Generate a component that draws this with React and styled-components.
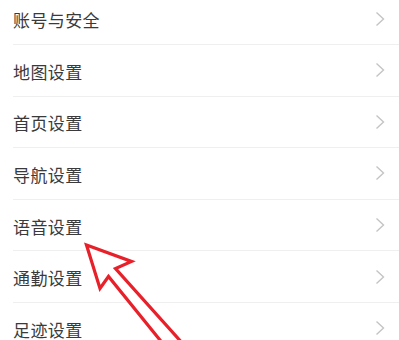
import React from "react";
import styled, { createGlobalStyle } from "styled-components";

const items = [
  "账号与安全",
  "地图设置",
  "首页设置",
  "导航设置",
  "语音设置",
  "通勤设置",
  "足迹设置",
];

export default function App() {
  return (
    <>
      <GlobalStyle />
      <Page>
        <List>
          {items.map((label) => (
            <Row key={label}>
              <Label>{label}</Label>
              <Chevron viewBox="0 0 10 16">
                <path d="M1.5 1.5 L8.5 8 L1.5 14.5" />
              </Chevron>
            </Row>
          ))}
        </List>
        <Pointer viewBox="0 0 399 340">
          <polygon points="86.5,245 131.5,261.5 115.5,268.5 184,345 164,345 108.5,276.5 100,288.5" />
        </Pointer>
      </Page>
    </>
  );
}

const GlobalStyle = createGlobalStyle`
  html, body {
    margin: 0;
    padding: 0;
    background: #fff;
    overflow: hidden;
  }
  body {
    font-family: "Noto Sans CJK SC", "Noto Sans", sans-serif;
  }
`;

const Page = styled.div`
  position: relative;
  width: 399px;
  height: 340px;
  overflow: hidden;
  background: #fff;
`;

const List = styled.div`
  display: flex;
  flex-direction: column;
  margin-top: -6.6px;
`;

const Row = styled.div`
  display: flex;
  align-items: center;
  justify-content: space-between;
  height: 50.6px;
  margin-left: 13px;
  padding-right: 14px;
  border-bottom: 1px solid #efefef;
  box-sizing: content-box;
`;

const Label = styled.span`
  font-size: 17px;
  line-height: 1;
  padding-top: 2px;
  color: #3a3a3a;
  letter-spacing: 0.4px;
`;

const Chevron = styled.svg`
  width: 10px;
  height: 16px;
  fill: none;
  stroke: #c4c4c4;
  stroke-width: 1.4;
`;

const Pointer = styled.svg`
  position: absolute;
  left: 0;
  top: 0;
  width: 399px;
  height: 340px;
  pointer-events: none;

  polygon {
    fill: #fff;
    stroke: #e8202a;
    stroke-width: 3.2;
    stroke-linejoin: miter;
  }
`;
